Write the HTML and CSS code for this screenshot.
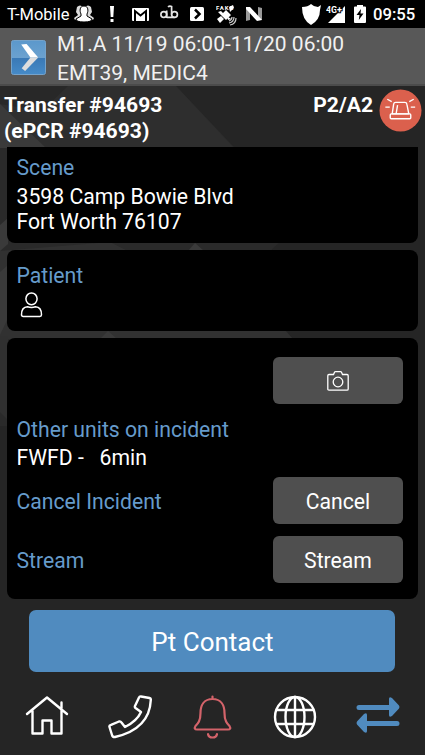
FILE: index.html
```html
<!DOCTYPE html>
<html lang="en">
<head>
<meta charset="utf-8">
<title>Transfer #94693</title>
<link rel="stylesheet" href="styles.css">
</head>
<body>
<main class="app">
  <svg class="backdrop" viewBox="0 0 425 669" preserveAspectRatio="none" aria-hidden="true">
    <path fill="#2a2a2a" d="M0 0H176L235 62L300 137L210 222L296 257L140 340L0 340Z"/>
    <path fill="#2e2e2e" d="M68 0H176L234 62H43L0 20V0Z"/>
    <path fill="#282828" d="M0 0H68L42 25L0 18Z"/>
    <path fill="#3a3a3a" d="M0 18L46 62H0ZM0 139L8 132V158L0 165Z"/>
    <path fill="#313131" d="M0 165L110 156L285 244L293 253H0Z"/>
    <path fill="#3a3a3a" d="M0 186L7 180V234L0 249ZM188 165L195 157L204 165ZM100 253L108 245L117 253Z"/>
    <path fill="#303030" d="M0 250H8V334L0 326Z"/>
  </svg>
  <div class="status">
    <span class="carrier">T-Mobile</span>
    <svg class="people" width="20" height="18" viewBox="0 0 20 18"><path fill="#ddd" d="M3 2q3-3 6 0l1 8-9 5-1-2 4-3-2-3zM17 2q-3-3-6 0l-1 8 9 5 1-2-4-3 2-3z"/><path fill="#fff" stroke="#000" d="M10 1C5.500 1 5.500 6 7 9v2l-5 3q0 3 8 3t8-3l-5-3V9c1.500-3 1.500-8-3-8z"/></svg>
    <svg class="alert" width="4" height="16" viewBox="0 0 4 16"><path fill="#fff" d="M0 0h4l-.7 11H.7zM.5 13h3v3h-3z"/></svg>
    <svg class="mail" width="17" height="13" viewBox="0 0 17 13"><rect width="17" height="13" rx="1" fill="#fff"/><path fill="none" stroke="#000" stroke-width="2" d="M3 13V3l5.500 4.500L14 3v10"/></svg>
    <svg class="voice" width="19" height="14" viewBox="0 0 19 14"><g fill="none" stroke="#e5e5e5" stroke-width="1.700"><circle cx="3.800" cy="9.500" r="2.900"/><circle cx="14.500" cy="9.500" r="2.900"/><path d="M6.700 5.500V13M6.700 12.400H14.500M11.600 9.500V1.500Q9.500.5 8 2"/></g></svg>
    <svg class="appmark" width="14" height="14" viewBox="0 0 14 14"><rect width="14" height="14" rx="1.500" fill="#fff"/><path fill="none" stroke="#000" stroke-width="2.500" d="M5 2.500L9.500 7L5 11.500"/></svg>
    <svg class="satellite" width="22" height="22" viewBox="0 0 22 22"><path fill="#fff" d="M13 2l4-2 1 3-4 4zM10 5l5 5-5 5-5-5zM1 14l4-3 3 3-4 4zM2 7l3-1 5 5-2 2zM11 11l4 3-3 1z"/><path fill="none" stroke="#ccc" stroke-width="1.200" d="M18 12q0 5-5 6M20 13q0 6-6 7M16 12q0 3-3 4"/><text class="tiny" x="0" y="5" fill="#fff" textLength="17">FAKE</text></svg>
    <svg class="letter-mark" width="18" height="14" viewBox="0 0 18 14"><path fill="#999" d="M1 1h4v12l-4 1zM13 0l4 1v12h-4z"/><path fill="#fff" d="M1 0h4l12 13-5 1L1 2z"/></svg>
    <svg class="shield" width="20" height="21" viewBox="0 0 20 21"><path fill="#fff" d="M9 0q3 3 7 3l3-2-1 5q0 10-9 15Q0 16 0 3q6 0 9-3z"/></svg>
    <svg class="signal" width="20" height="18" viewBox="0 0 20 18"><path fill="#fff" d="M19 1v17H2L19 1z"/><text class="tiny net" x="0" y="7.500" fill="#fff" stroke="#000" stroke-width="2" paint-order="stroke" textLength="16">4G+</text></svg>
    <svg class="battery" width="12" height="18" viewBox="0 0 12 18"><path fill="#fff" d="M3 1.500V0h6v1.500h2q1 0 1 1V17q0 1-1 1H1q-1 0-1-1V2.500q0-1 1-1z"/><path fill="#000" d="M7 4L2.500 10H5.500L4.800 15L9.500 8.500H6.500z"/></svg>
    <span class="clock">09:55</span>
  </div>
  <header class="shift">
    <svg class="logo" width="35" height="35" viewBox="0 0 36 36"><defs><linearGradient id="blue" x2="0" y2="1"><stop stop-color="#5b98cc"/><stop offset=".5" stop-color="#6ba1cf"/><stop offset=".5" stop-color="#3978b5"/><stop offset="1" stop-color="#468bc8"/></linearGradient></defs><rect x=".5" y=".5" width="35" height="35" rx="2" fill="url(#blue)" stroke="#77a4cc"/><path fill="#fff" d="M10.500 4.500L16 4L28 18H20z"/><path fill="#ddd" d="M28 18L14.500 32L11 29L20 18z"/></svg>
    <div>M1.A 11/19 06:00-11/20 06:00<br>EMT39, MEDIC4</div>
  </header>
  <section class="incident">
    <h1>Transfer #94693<br>(ePCR #94693)</h1>
    <strong class="priority">P2/A2</strong>
    <svg class="siren" width="43" height="43" viewBox="0 0 44 44"><circle cx="22" cy="22" r="21.500" fill="#db604d"/><g fill="none" stroke="#fff" stroke-width="1.400" stroke-linejoin="round"><path d="M13.500 25.500L15 15.500q.3-1.800 2-1.800h9.500q1.700 0 2 1.800L30.500 25.500zM17.500 25.500L19 16.500"/><rect x="11.500" y="25.500" width="21" height="5" rx="1"/><path d="M8.500 10.500L13 13M31 13L35.500 10.500M6.500 18.500h4.500M32.500 18.500H37"/></g></svg>
  </section>
  <section class="card scene">
    <h2>Scene</h2>
    <p>3598 Camp Bowie Blvd<br>Fort Worth 76107</p>
  </section>
  <section class="card patient">
    <h2>Patient</h2>
    <svg width="23" height="26" viewBox="0 0 23 26"><g fill="none" stroke="#fff" stroke-width="1.500"><ellipse cx="11.500" cy="6.800" rx="5.600" ry="5.900"/><path d="M7.500 14.800q4 1.500 8 0c4.500.2 6 3.500 6 8q0 1.700-1.700 1.700H3.200q-1.700 0-1.700-1.700c0-4.500 1.500-7.800 6-8z"/></g></svg>
  </section>
  <section class="card actions">
    <button class="key camera" aria-label="Camera"><svg width="22" height="20" viewBox="0 0 22 20"><g fill="none" stroke="#fff" stroke-width="1.300"><path d="M2 3.500h4.500l1-2.200q.3-.6 1-.6h5q.7 0 1 .6l1 2.200H20q1.200 0 1.200 1.200V18q0 1.200-1.200 1.200H2Q.8 19.200.8 18V4.700Q.8 3.500 2 3.500z"/><circle cx="11" cy="11" r="4.800"/></g></svg></button>
    <h2 class="units">Other units on incident</h2>
    <p class="eta">FWFD -&nbsp;&nbsp; 6min</p>
    <div class="row"><h2>Cancel Incident</h2><button class="key">Cancel</button></div>
    <div class="row"><h2>Stream</h2><button class="key">Stream</button></div>
  </section>
  <button class="contact">Pt Contact</button>
  <nav class="tabs">
    <svg viewBox="0 0 44 44"><path d="M2 19L22 2.500L42 19M7.500 16V38.500H17.500V25.500H26.500V38.500H36.500V15M36.500 13V7.500"/></svg>
    <svg viewBox="0 0 44 44"><path d="M33 1.500L41.500 3Q43 3.300 42.800 5Q41.500 34 7 42Q4.500 42.500 4 40L1.500 32Q1 30.500 3 29.800L11 26.500Q12.500 26 13.500 27.500L17 32Q29 26 33 17L27.500 13Q26.500 12.200 27 11L31 2.500Q31.700 1 33 1.500z"/></svg>
    <svg class="bell" viewBox="0 0 44 44"><path d="M21.500 4C13 4 9.500 10.500 9.500 18C9.500 26 7 28.500 4.500 31Q2.500 34.500 6 34.500H37Q40.500 34.500 38.500 31C36 28.500 33.500 26 33.500 18C33.500 10.500 30 4 21.500 4zM21.500 4V1.500M17 39q.5 3.500 4.500 3.500t4.500-3.500"/></svg>
    <svg viewBox="0 0 44 44"><circle cx="22" cy="22" r="20"/><ellipse cx="22" cy="22" rx="9.500" ry="20"/><path d="M22 2V42M4.500 15H39.500M4.500 29H39.500"/></svg>
    <svg class="swap" viewBox="0 0 44 44"><path d="M3 10H33V4q0-3 3-1L43 10.500q1 1.500 0 3L36 21q-3 2-3-1V15H3Q.5 15 .5 12.500T3 10zM41 26H11V20q0-3-3-1L1 26.500q-1 1.500 0 3L8 37q3 2 3-1V31H41q2.500 0 2.500-2.500T41 26z"/></svg>
  </nav>
</main>
</body>
</html>
```
FILE: styles.css
```css
* { box-sizing: border-box; }
body { margin: 0; background: #252525; color: #fff; font: 21.2px/25px Roboto, sans-serif; }
h1, h2, p { margin: 0; font-size: inherit; font-weight: 400; }
svg { display: block; flex: none; }
button { border: 0; padding: 0; color: inherit; font: inherit; }
.app { position: relative; isolation: isolate; width: 425px; height: 755px; overflow: hidden; }
.backdrop { position: absolute; z-index: -1; top: 86px; left: 0; width: 425px; height: 669px; }
.status { display: flex; height: 28px; padding: 5px 0 0 7px; background: #000; white-space: nowrap; }
.carrier { width: 67px; font-size: 16.5px; line-height: 20px; }
.alert { margin: 1px 0 0 16px; }
.mail { margin: 3px 0 0 18px; }
.voice { margin-left: 11px; }
.appmark { margin: 2px 0 0 11px; }
.satellite { margin-left: 12px; }
.letter-mark { margin: 2px 0 0 7px; }
.shield { margin: -1px 0 0 39px; }
.signal { margin-left: 4px; }
.battery { margin-left: 8px; }
.clock { margin-left: 7px; font-size: 16.7px; line-height: 20px; font-weight: 500; }
.tiny { font: 700 6px Roboto, sans-serif; }
.net { font-size: 9px; }
.shift { display: flex; height: 58px; padding: 2px 11px 0; background: #585858; border-bottom: 2px solid #4b4b4b; font-size: 21px; line-height: 28.5px; color: #f1f1f1; }
.logo { margin-top: 10px; margin-right: 11px; }
.incident { display: flex; height: 61px; padding: 6px 3px 0 4px; }
.incident h1 { flex: 1; font-size: 21.1px; font-weight: 700; line-height: 25.5px; }
.priority { font-size: 21.1px; margin-right: 6px; }
.siren { margin-top: -3px; }
.card { margin: 0 7px 7px; padding: 0 15px 0 9.5px; background: #000; border-radius: 8px; }
.card h2 { color: #669bcb; }
.scene { height: 96px; padding-top: 8px; border-radius: 0 0 8px 8px; }
.scene p { margin-top: 4px; }
.patient { height: 81px; padding-top: 13px; }
.patient svg { margin: 4px 0 0 3px; }
.actions { height: 261px; padding-top: 19px; }
.key { display: flex; align-items: center; justify-content: center; width: 130px; height: 47px; padding-top: 1px; border-radius: 6px; background: #4f4f4f; }
.camera { margin-left: auto; }
.units { margin-top: 13px; }
.eta { margin-top: 3px; }
.row { display: flex; align-items: center; justify-content: space-between; margin-top: 7px; }
.row h2 { padding-top: 2px; }
.row + .row { margin-top: 12px; }
.contact { display: block; width: 366px; height: 62px; margin: 11px 0 0 29.4px; padding-top: 1px; border-radius: 7px; background: #508bbf; font-size: 26px; line-height: 30px; }
.tabs { display: flex; justify-content: space-between; padding: 22.7px 25px 0; }
.tabs svg { width: 44px; height: 44px; fill: none; stroke: #fff; stroke-width: 2.4; stroke-linecap: round; stroke-linejoin: round; }
.tabs .bell { stroke: #d3636a; stroke-width: 2.2; }
.tabs .swap { fill: #508bbf; stroke: none; }
```
